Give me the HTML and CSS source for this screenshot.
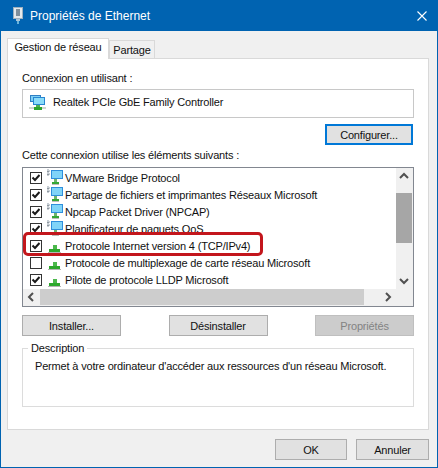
FILE: index.html
```html
<!DOCTYPE html>
<html lang="fr">
<head>
<meta charset="utf-8">
<title>Propriétés de Ethernet</title>
<link rel="stylesheet" href="styles.css">
</head>
<body>
<svg class="defs" width="0" height="0" aria-hidden="true">
  <symbol id="net" viewBox="0 0 17 17">
    <rect x="1.500" y="1.500" width="10" height="6" fill="#7fd0f5" stroke="#2f7fc4"/>
    <rect x="4.500" y="3.500" width="11" height="7" fill="#8adcf8" stroke="#2786d2"/>
    <rect x="0" y="13" width="17" height="2" fill="#cfd6cf"/>
    <rect x="7" y="11" width="4" height="2" fill="#4fb04f"/>
    <rect x="5" y="13" width="8" height="3" fill="#2da52d"/>
  </symbol>
  <symbol id="service" viewBox="0 0 17 17">
    <path d="M1 0h2v1h1v2h-1v1h1v2h-1v1h-2z" fill="#c8ced4"/>
    <path d="M1 2h2v1h-2zM1 5h2v1h-2z" fill="#8f98a0"/>
    <rect x="5.500" y="1.500" width="11" height="8" fill="#80d4f8" stroke="#2f8fdc"/>
    <rect x="8" y="10" width="3" height="3" fill="#6fb46f"/>
    <rect x="6" y="13" width="7" height="2" fill="#35a835"/>
    <rect x="6" y="15" width="7" height="1" fill="#bcbcbc"/>
  </symbol>
  <symbol id="proto" viewBox="0 0 17 17">
    <path d="M7 8h4v4h-4z" fill="#4cb84c"/>
    <path d="M3 12h11v3h-11z" fill="#2da82d"/>
    <rect x="2" y="15" width="13" height="1" fill="#b5b5b5"/>
  </symbol>
  <symbol id="tick" viewBox="0 0 10 10">
    <path d="M1.500 4.500l2.500 2.500 4.500-5" fill="none" stroke="#1a1a1a" stroke-width="2"/>
  </symbol>
</svg>

<main class="window">
  <header class="titlebar">
    <svg class="title-icon" viewBox="0 0 10 17" aria-hidden="true">
      <rect x="0.500" y="0.500" width="9" height="11" fill="#e4e9ec" stroke="#9db0bf"/>
      <rect x="3" y="2" width="4" height="7" fill="#7f8f9c"/>
      <rect x="3" y="12" width="4" height="2" fill="#a9c5d8"/>
      <rect x="4" y="14" width="2" height="3" fill="#69b4dd"/>
    </svg>
    <h1 class="title">Propriétés de Ethernet</h1>
    <svg class="close" viewBox="0 0 10 10" aria-hidden="true">
      <path d="M0.5 0.5l9 9M9.5 0.5l-9 9" stroke="#fff" stroke-width="1.1" fill="none"/>
    </svg>
  </header>

  <div class="body">
    <nav class="tabs">
      <span class="tab active">Gestion de réseau</span>
      <span class="tab">Partage</span>
    </nav>

    <section class="panel">
      <p class="label first">Connexion en utilisant :</p>
      <div class="adapter">
        <svg class="adapter-icon"><use href="#net"/></svg>
        <span>Realtek PCIe GbE Family Controller</span>
      </div>
      <div class="config-row"><button class="btn focus">Configurer...</button></div>
      <p class="label second">Cette connexion utilise les éléments suivants :</p>

      <div class="list">
        <div class="list-main">
          <ul class="rows">
            <li class="row"><span class="check"><svg><use href="#tick"/></svg></span><svg class="row-icon"><use href="#service"/></svg><span>VMware Bridge Protocol</span></li>
            <li class="row"><span class="check"><svg><use href="#tick"/></svg></span><svg class="row-icon"><use href="#service"/></svg><span>Partage de fichiers et imprimantes Réseaux Microsoft</span></li>
            <li class="row"><span class="check"><svg><use href="#tick"/></svg></span><svg class="row-icon"><use href="#service"/></svg><span>Npcap Packet Driver (NPCAP)</span></li>
            <li class="row"><span class="check"><svg><use href="#tick"/></svg></span><svg class="row-icon"><use href="#service"/></svg><span>Planificateur de paquets QoS</span></li>
            <li class="row"><span class="check"><svg><use href="#tick"/></svg></span><svg class="row-icon"><use href="#proto"/></svg><span>Protocole Internet version 4 (TCP/IPv4)</span></li>
            <li class="row"><span class="check"></span><svg class="row-icon"><use href="#proto"/></svg><span>Protocole de multiplexage de carte réseau Microsoft</span></li>
            <li class="row"><span class="check"><svg><use href="#tick"/></svg></span><svg class="row-icon"><use href="#proto"/></svg><span>Pilote de protocole LLDP Microsoft</span></li>
          </ul>
          <div class="vscroll">
            <svg class="arrow" viewBox="0 0 16 17"><path d="M4 10l4-4 4 4" fill="none" stroke="#505050" stroke-width="2"/></svg>
            <div class="vtrack"><div class="vthumb"></div></div>
            <svg class="arrow" viewBox="0 0 16 17"><path d="M4 7l4 4 4-4" fill="none" stroke="#505050" stroke-width="2"/></svg>
          </div>
        </div>
        <div class="hscroll">
          <svg class="arrow-h" viewBox="0 0 17 16"><path d="M10 4l-4 4 4 4" fill="none" stroke="#505050" stroke-width="2"/></svg>
          <div class="htrack"><div class="hthumb"></div></div>
          <svg class="arrow-h" viewBox="0 0 17 16"><path d="M7 4l4 4-4 4" fill="none" stroke="#505050" stroke-width="2"/></svg>
          <div class="corner"></div>
        </div>
        <div class="highlight"></div>
      </div>

      <div class="actions">
        <button class="btn wide">Installer...</button>
        <button class="btn wide">Désinstaller</button>
        <button class="btn wide disabled">Propriétés</button>
      </div>

      <fieldset class="group">
        <legend>Description</legend>
        <p>Permet à votre ordinateur d'accéder aux ressources d'un réseau Microsoft.</p>
      </fieldset>
    </section>

    <footer class="footer">
      <button class="btn ok">OK</button>
      <button class="btn cancel">Annuler</button>
    </footer>
  </div>
</main>
</body>
</html>
```

FILE: styles.css
```css
* { box-sizing: border-box; }
html, body { margin: 0; padding: 0; }
body {
  width: 438px;
  height: 468px;
  overflow: hidden;
  background: #f0f0f0;
  font-family: "Liberation Sans", Arial, sans-serif;
  font-size: 11px;
  letter-spacing: -0.17px;
  color: #111;
}
.defs { display: block; height: 0; }
.window {
  width: 438px;
  height: 468px;
  border: 1px solid #0063b1;
  border-top: 0;
  display: flex;
  flex-direction: column;
}
.titlebar {
  height: 31px;
  margin: 0 -1px;
  flex: none;
  background: #0063b1;
  display: flex;
  align-items: center;
  padding: 0 11px 0 13px;
}
.title-icon { width: 10px; height: 17px; flex: none; }
.title {
  margin: 0 0 0 7px;
  font-size: 12px;
  font-weight: 400;
  letter-spacing: 0;
  color: #fff;
  flex: 1;
}
.close { width: 10px; height: 10px; flex: none; }
.body { flex: 1; padding: 7px 8px 0 6px; display: flex; flex-direction: column; }
.tabs { display: flex; height: 20px; align-items: flex-end; flex: none; position: relative; z-index: 1; }
.tab {
  height: 18px;
  width: 46px;
  border: 1px solid #d9d9d9;
  border-bottom: 0;
  background: #f0f0f0;
  text-align: center;
  line-height: 19px;
}
.tab.active {
  height: 21px;
  width: 102px;
  margin-bottom: -1px;
  background: #fff;
  line-height: 17px;
  border-right-color: #d9d9d9;
}
.panel {
  height: 372px;
  flex: none;
  background: #fff;
  border: 1px solid #d9d9d9;
  padding: 0 14px 0 14px;
}
.label { margin: 0; line-height: 16px; }
.label.first { padding-top: 11px; height: 30px; }
.adapter {
  height: 29px;
  border: 1px solid #c8c8c8;
  display: flex;
  align-items: center;
  padding: 0 0 3px 6px;
}
.adapter-icon { width: 17px; height: 17px; margin-right: 7px; flex: none; }
.config-row { display: flex; justify-content: flex-end; padding: 6px 1px 0 0; }
.btn {
  font: inherit;
  letter-spacing: inherit;
  color: #111;
  background: #e1e1e1;
  border: 1px solid #adadad;
  height: 21px;
  padding: 0;
  line-height: 18px;
}
.btn.focus { width: 88px; border: 2px solid #0078d7; line-height: 16px; }
.label.second { padding-top: 2px; height: 22px; }
.list {
  height: 140px;
  border: 1px solid #828790;
  position: relative;
  display: flex;
  flex-direction: column;
}
.list-main { display: flex; height: 121px; flex: none; }
.rows { list-style: none; margin: 0; padding: 1px 0 0 7px; flex: 1; overflow: hidden; }
.row { height: 17px; display: flex; align-items: center; white-space: nowrap; }
.check {
  width: 12px;
  height: 12px;
  border: 1px solid #333;
  background: #fff;
  flex: none;
  display: flex;
}
.check svg { width: 10px; height: 10px; }
.row-icon { width: 17px; height: 17px; margin: 0 2px 0 4px; flex: none; }
.vscroll {
  width: 17px;
  flex: none;
  background: #f0f0f0;
  display: flex;
  flex-direction: column;
}
.arrow { width: 16px; height: 17px; flex: none; }
.vtrack { flex: 1; padding-top: 8px; }
.vthumb { height: 50px; width: 16px; background: #a6a6a6; }
.hscroll { display: flex; height: 17px; background: #f0f0f0; flex: none; }
.arrow-h { width: 17px; height: 16px; flex: none; }
.htrack { flex: 1; }
.hthumb { height: 16px; width: 324px; background: #cdcdcd; }
.corner { width: 17px; flex: none; }
.highlight {
  position: absolute;
  left: 0;
  top: 64px;
  width: 240px;
  height: 24px;
  border: 3px solid #c3161c;
  border-radius: 5px;
  pointer-events: none;
}
.actions { display: flex; justify-content: space-between; padding: 8px 0 0 0; }
.btn.wide { width: 99px; }
.btn.disabled { background: #ccc; border-color: #bfbfbf; color: #838383; }
.group {
  margin: 4px 0 0 0;
  padding: 0 0 0 12px;
  height: 67px;
  border: 1px solid #dcdcdc;
  min-width: 0;
}
.group legend { padding: 0 3px; margin-left: -7px; line-height: 16px; }
.group p { margin: 2px 0 0 0; line-height: 16px; }
.footer { display: flex; justify-content: flex-end; gap: 9px; padding: 9px 0 0 0; }
.btn.ok { width: 72px; }
.btn.cancel { width: 73px; }
```
